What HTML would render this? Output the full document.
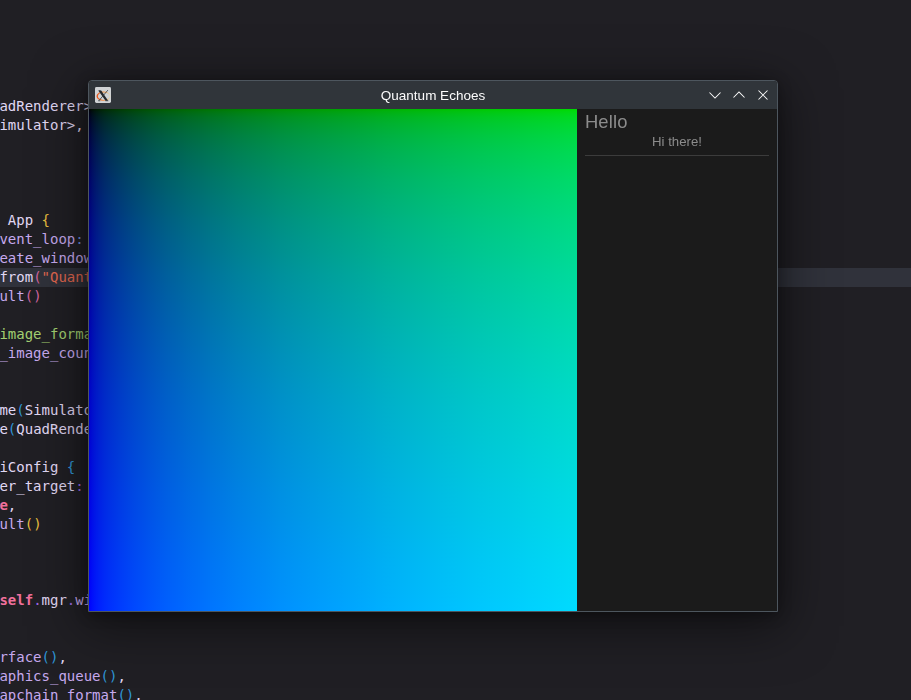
<!DOCTYPE html>
<html><head><meta charset="utf-8"><title>Quantum Echoes</title>
<style>
html,body{margin:0;padding:0;}
body{width:911px;height:700px;overflow:hidden;position:relative;background:#201f24;}
#hl{position:absolute;left:0;top:268px;width:911px;height:19px;background:#30323b;}
#code{position:absolute;left:-0.6px;top:97px;margin:0;white-space:pre;font-family:"DejaVu Sans Mono","Liberation Mono",monospace;font-size:14px;line-height:19px;color:#d6d6ee;}
#code i{font-style:normal;}
.w{color:#e0d8f4;} .l{color:#c6a9ee;} .y{color:#e6bd3e;} .b{color:#2f96d6;} .b2{color:#6f8fe0;}
.p{color:#d0649f;} .s{color:#e2674f;} .g{color:#a3d071;} .v{color:#9c68e8;} .k{color:#f0709c;font-weight:bold;}
#win{position:absolute;left:88px;top:80px;width:688px;height:530px;border:1px solid #4d565e;border-radius:4px 4px 0 0;background:#1b1b1b;box-shadow:0 3px 14px rgba(0,0,0,0.3),0 10px 52px 4px rgba(0,0,0,0.5);overflow:hidden;}
#tb{position:absolute;left:0;top:0;width:688px;height:28px;background:#30353a;}
#title{position:absolute;left:0;top:1px;will-change:transform;width:688px;height:28px;line-height:28px;text-align:center;color:#fcfcfc;font-family:"Liberation Sans",sans-serif;font-size:13.5px;}
#grad{position:absolute;left:0;top:28px;width:488px;height:502px;
background-image:linear-gradient(to right,rgb(0,0,0) 0.00px,rgb(0,1,0) 0.31px,rgb(0,6,0) 1.22px,rgb(0,13,0) 2.75px,rgb(0,20,0) 4.88px,rgb(0,27,0) 7.62px,rgb(0,34,0) 10.98px,rgb(0,41,0) 14.94px,rgb(0,47,0) 19.52px,rgb(0,53,0) 24.71px,rgb(0,59,0) 30.50px,rgb(0,65,0) 36.91px,rgb(0,71,0) 43.92px,rgb(0,77,0) 51.55px,rgb(0,83,0) 59.78px,rgb(0,89,0) 68.62px,rgb(0,95,0) 78.08px,rgb(0,100,0) 88.14px,rgb(0,106,0) 98.82px,rgb(0,111,0) 110.10px,rgb(0,117,0) 122.00px,rgb(0,122,0) 134.50px,rgb(0,128,0) 147.62px,rgb(0,133,0) 161.34px,rgb(0,138,0) 175.68px,rgb(0,144,0) 190.62px,rgb(0,149,0) 206.18px,rgb(0,154,0) 222.35px,rgb(0,159,0) 239.12px,rgb(0,164,0) 256.50px,rgb(0,169,0) 274.50px,rgb(0,175,0) 293.11px,rgb(0,180,0) 312.32px,rgb(0,185,0) 332.14px,rgb(0,190,0) 352.58px,rgb(0,195,0) 373.62px,rgb(0,200,0) 395.28px,rgb(0,204,0) 417.55px,rgb(0,209,0) 440.42px,rgb(0,214,0) 463.90px,rgb(0,219,0) 488.00px),linear-gradient(to bottom,rgb(0,0,0) 0.00px,rgb(0,0,2) 0.31px,rgb(0,0,8) 1.26px,rgb(0,0,17) 2.82px,rgb(0,0,25) 5.02px,rgb(0,0,34) 7.84px,rgb(0,0,41) 11.29px,rgb(0,0,49) 15.37px,rgb(0,0,56) 20.08px,rgb(0,0,64) 25.41px,rgb(0,0,71) 31.38px,rgb(0,0,78) 37.96px,rgb(0,0,85) 45.18px,rgb(0,0,91) 53.02px,rgb(0,0,98) 61.49px,rgb(0,0,105) 70.59px,rgb(0,0,111) 80.32px,rgb(0,0,118) 90.67px,rgb(0,0,124) 101.66px,rgb(0,0,131) 113.26px,rgb(0,0,137) 125.50px,rgb(0,0,143) 138.36px,rgb(0,0,149) 151.86px,rgb(0,0,156) 165.97px,rgb(0,0,162) 180.72px,rgb(0,0,168) 196.09px,rgb(0,0,174) 212.10px,rgb(0,0,180) 228.72px,rgb(0,0,186) 245.98px,rgb(0,0,192) 263.86px,rgb(0,0,198) 282.38px,rgb(0,0,204) 301.51px,rgb(0,0,209) 321.28px,rgb(0,0,215) 341.67px,rgb(0,0,221) 362.69px,rgb(0,0,227) 384.34px,rgb(0,0,232) 406.62px,rgb(0,0,238) 429.52px,rgb(0,0,244) 453.06px,rgb(0,0,249) 477.21px,rgb(0,0,255) 502.00px);background-blend-mode:screen;}
#panel{will-change:transform;position:absolute;left:488px;top:28px;width:200px;height:502px;background:#1b1b1b;color:#8c8c8c;font-family:"Liberation Sans",sans-serif;}
#hello{position:absolute;left:7.9px;letter-spacing:0.15px;top:2px;font-size:18.4px;line-height:22px;}
#hi{position:absolute;left:8px;width:184px;top:25px;text-align:center;font-size:13.2px;line-height:16px;}
#sep{position:absolute;left:8px;width:184px;top:46px;height:1px;background:#3c3c3c;}
svg{position:absolute;}
</style></head><body>
<div id="hl"></div>
<pre id="code"><i class="w">adRenderer&gt;</i>
<i class="w">imulator&gt;,</i>




<i class="w"> App </i><i class="y">{</i>
<i class="l">vent_loop</i><i class="b2">:</i>
<i class="l">eate_window</i>
<i class="w">from</i><i class="p">(</i><i class="s">"Quantum Echoes"</i>
<i class="l">ult</i><i class="p">()</i>

<i class="g">image_format</i>
<i class="l">_image_count</i>


<i class="w">me</i><i class="b">(</i><i class="w">Simulator</i>
<i class="w">e</i><i class="b">(</i><i class="w">QuadRenderer</i>

<i class="w">iConfig </i><i class="b">{</i>
<i class="w">er_target</i><i class="v">:</i>
<i class="k">e</i><i class="w">,</i>
<i class="l">ult</i><i class="y">()</i>



<i class="k">self</i><i class="v">.</i><i class="w">mgr</i><i class="v">.</i><i class="l">window</i>


<i class="l">rface</i><i class="b">()</i><i class="w">,</i>
<i class="l">aphics_queue</i><i class="b">()</i><i class="w">,</i>
<i class="l">apchain_format</i><i class="b">()</i><i class="w">,</i></pre>
<div id="win">
 <div id="tb"></div>
 <div id="title">Quantum Echoes</div>
 <svg id="xicon" style="left:6px;top:6px" width="16" height="16" viewBox="0 0 16 16">
  <defs><linearGradient id="og" x1="0" y1="0" x2="1" y2="0"><stop offset="0" stop-color="#e8501a"/><stop offset="0.5" stop-color="#f08a3a"/><stop offset="0.8" stop-color="#f2b468"/><stop offset="1" stop-color="#f4d9a8"/></linearGradient></defs>
  <rect x="0" y="0" width="16" height="16" rx="1.4" fill="#cfd2d4"/>
  <path fill-rule="evenodd" fill="url(#og)" d="M1.5 9.2 A6.9 4.6 0 1 0 15.3 9.2 A6.9 4.6 0 1 0 1.5 9.2 Z M2.9 9.2 A6.0 3.7 0 1 1 14.9 9.2 A6.0 3.7 0 1 1 2.9 9.2 Z"/>
  <path d="M3.3 3.6 L4.6 3.2 L6.2 3.6 L13.1 13.7 L10.5 13.7 Z" fill="#25282b"/>
  <path d="M12.9 3.1 L3.7 13.9" stroke="#33373a" stroke-width="0.8" fill="none"/>
  <path d="M3.3 13.8 H5.2 M10.4 13.8 H13.4" stroke="#33373a" stroke-width="0.6" fill="none"/>
 </svg>
 <svg style="left:0;top:0" width="688" height="28" viewBox="0 0 688 28">
  <g fill="none" stroke="#fcfcfc" stroke-width="1.05">
   <path d="M620.5 11.5 L626 17 L631.5 11.5"/>
   <path d="M644.5 16.5 L650 11 L655.5 16.5"/>
   <path d="M669.5 9.5 L678.5 18.5 M678.5 9.5 L669.5 18.5"/>
  </g>
 </svg>
 <div id="grad"></div>
 <div id="panel"><div id="hello">Hello</div><div id="hi">Hi there!</div><div id="sep"></div></div>
</div>
</body></html>
